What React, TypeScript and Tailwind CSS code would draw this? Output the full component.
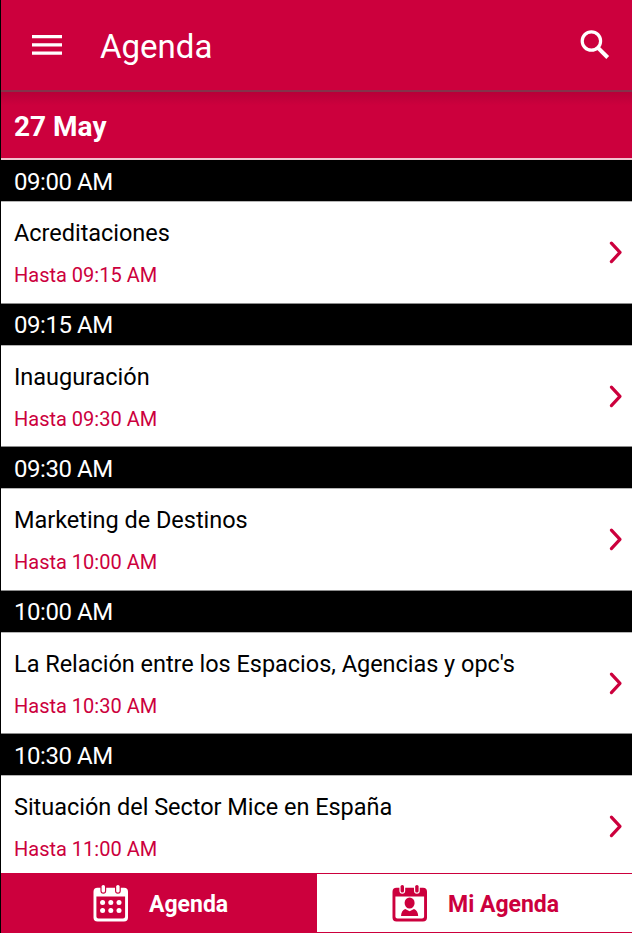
import { useState } from "react";

interface Session {
  start: string;
  title: string;
  end: string;
}

const sessions: Session[] = [
  { start: "09:00 AM", title: "Acreditaciones", end: "09:15 AM" },
  { start: "09:15 AM", title: "Inauguración", end: "09:30 AM" },
  { start: "09:30 AM", title: "Marketing de Destinos", end: "10:00 AM" },
  {
    start: "10:00 AM",
    title: "La Relación entre los Espacios, Agencias y opc's",
    end: "10:30 AM",
  },
  { start: "10:30 AM", title: "Situación del Sector Mice en España", end: "11:00 AM" },
];

const MenuIcon = () => (
  <svg width="30" height="21" viewBox="0 0 30 21" fill="currentColor">
    <path d="M0 0h30v3.2H0zM0 8.2h30v3.2H0zM0 16.6h30v3.2H0z" />
  </svg>
);

const SearchIcon = () => (
  <svg width="30" height="30" viewBox="0 0 30 30" fill="none" stroke="currentColor">
    <circle cx="11.4" cy="11" r="9.2" strokeWidth="3.2" />
    <path d="M17.8 17.6L27.7 27.5" strokeWidth="4" />
  </svg>
);

const ChevronIcon = () => (
  <svg width="14" height="24" viewBox="0 0 14 24" fill="none" stroke="currentColor">
    <path d="M2.4 3.2L11 12.4L2.4 21.6" strokeWidth="3.2" strokeLinecap="round" strokeLinejoin="round" />
  </svg>
);

// Frame with a thick header and two binder rings, shared by both tabs
const CalendarFrame = ({ children }: { children: React.ReactNode }) => (
  <svg width="36" height="38" viewBox="0 0 36 38" fill="currentColor">
    <path
      fillRule="evenodd"
      d="M4.5 3.8H7.4V6.5Q7.4 9.8 10.3 9.8Q13.2 9.8 13.2 6.5V3.8H22V6.5Q22 9.8 24.9 9.8Q27.8 9.8 27.8 6.5V3.8H31Q35 3.8 35 7.8V33.4Q35 37.4 31 37.4H4.5Q.5 37.4 .5 33.4V7.8Q.5 3.8 4.5 3.8ZM3.4 12.4V32.4Q3.4 34.5 5.5 34.5H30Q32.1 34.5 32.1 32.4V12.4Z"
    />
    <rect x="8.6" y="1" width="3.4" height="7.6" rx="1.6" />
    <rect x="23.2" y="1" width="3.4" height="7.6" rx="1.6" />
    {children}
  </svg>
);

const AgendaIcon = () => (
  <CalendarFrame>
    {[18.6, 26.6].map((cy) =>
      [9.6, 17.8, 26].map((cx) => <circle key={`${cx}-${cy}`} cx={cx} cy={cy} r="2.5" />)
    )}
  </CalendarFrame>
);

const MyAgendaIcon = () => (
  <CalendarFrame>
    <ellipse cx="17.6" cy="19" rx="5" ry="5.5" />
    <path d="M9 32Q9.3 26.6 13.2 25L17.6 27.2L22 25Q25.9 26.6 26.2 32Z" />
  </CalendarFrame>
);

const SessionRow = ({ session }: { session: Session }) => (
  <li className="flex h-[143.5px] flex-col">
    <div className="flex h-[42px] shrink-0 items-center border-b border-[#b5b5b5] bg-black pl-[13px] pt-[2px] text-2xl tracking-[-0.45px] text-white">
      {session.start}
    </div>
    <div className="flex flex-1 items-center justify-between border-b border-[#8c8c8c] bg-white pl-[13px] pr-[9px] text-[#cc003d]">
      <div className="pt-[4px]">
        <p className="text-[23.5px] leading-[42px] tracking-[-0.03px] text-black">{session.title}</p>
        <p className="text-xl leading-[42px]">Hasta {session.end}</p>
      </div>
      <ChevronIcon />
    </div>
  </li>
);

const App = () => {
  const [tab, setTab] = useState<"all" | "mine">("all");

  const tabClass = (active: boolean) =>
    `flex items-center text-[23px] font-bold ${
      active ? "bg-[#cc003d] text-white" : "bg-white text-[#cc003d]"
    }`;

  return (
    <div className="flex h-[933px] w-[632px] flex-col overflow-hidden border-l border-black bg-white font-[Roboto,sans-serif]">
      <header className="flex h-[92px] shrink-0 items-center border-b-2 border-[#85324a] bg-[#cc003d] pl-[31px] pr-[22px] text-white">
        <button aria-label="Menú">
          <MenuIcon />
        </button>
        <h1 className="ml-[38px] flex-1 pt-[4px] text-[33px]">Agenda</h1>
        <button aria-label="Buscar">
          <SearchIcon />
        </button>
      </header>

      <h2 className="flex h-[68px] shrink-0 items-center border-b-2 border-[#f0c3cf] bg-[#cc003d] bg-linear-to-b from-[#b80038] to-[#cc003d] to-20% pl-[13px] pt-[4px] text-[28px] font-bold text-white">
        27 May
      </h2>

      <ul className="min-h-0 flex-1 overflow-hidden">
        {sessions.map((session) => (
          <SessionRow key={session.start} session={session} />
        ))}
      </ul>

      <nav className="grid h-[60px] shrink-0 grid-cols-[316px_1fr] border-y border-[#cc003d]">
        <button className={`${tabClass(tab === "all")} pl-[92px]`} onClick={() => setTab("all")}>
          <AgendaIcon />
          <span className="ml-[20px] pt-[5px]">Agenda</span>
        </button>
        <button className={`${tabClass(tab === "mine")} pl-[75px]`} onClick={() => setTab("mine")}>
          <MyAgendaIcon />
          <span className="ml-[20px] pt-[5px]">Mi Agenda</span>
        </button>
      </nav>
    </div>
  );
};

export default App;
